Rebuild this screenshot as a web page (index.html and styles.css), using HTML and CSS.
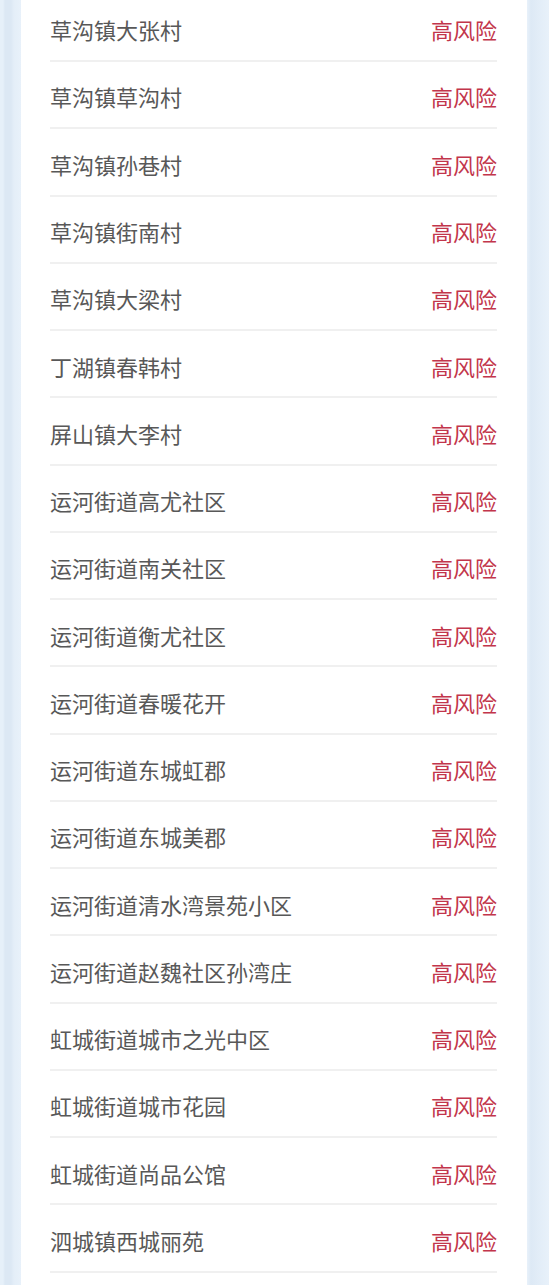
FILE: index.html
```html
<!DOCTYPE html>
<html lang="zh-CN">
<head>
<meta charset="utf-8">
<title>风险地区</title>
<link rel="stylesheet" href="styles.css">
</head>
<body>
<div class="page">
  <div class="card">
    <ul class="list">
      <li class="row"><span class="name">草沟镇大张村</span><span class="level">高风险</span></li>
      <li class="row"><span class="name">草沟镇草沟村</span><span class="level">高风险</span></li>
      <li class="row"><span class="name">草沟镇孙巷村</span><span class="level">高风险</span></li>
      <li class="row"><span class="name">草沟镇街南村</span><span class="level">高风险</span></li>
      <li class="row"><span class="name">草沟镇大梁村</span><span class="level">高风险</span></li>
      <li class="row"><span class="name">丁湖镇春韩村</span><span class="level">高风险</span></li>
      <li class="row"><span class="name">屏山镇大李村</span><span class="level">高风险</span></li>
      <li class="row"><span class="name">运河街道高尤社区</span><span class="level">高风险</span></li>
      <li class="row"><span class="name">运河街道南关社区</span><span class="level">高风险</span></li>
      <li class="row"><span class="name">运河街道衡尤社区</span><span class="level">高风险</span></li>
      <li class="row"><span class="name">运河街道春暖花开</span><span class="level">高风险</span></li>
      <li class="row"><span class="name">运河街道东城虹郡</span><span class="level">高风险</span></li>
      <li class="row"><span class="name">运河街道东城美郡</span><span class="level">高风险</span></li>
      <li class="row"><span class="name">运河街道清水湾景苑小区</span><span class="level">高风险</span></li>
      <li class="row"><span class="name">运河街道赵魏社区孙湾庄</span><span class="level">高风险</span></li>
      <li class="row"><span class="name">虹城街道城市之光中区</span><span class="level">高风险</span></li>
      <li class="row"><span class="name">虹城街道城市花园</span><span class="level">高风险</span></li>
      <li class="row"><span class="name">虹城街道尚品公馆</span><span class="level">高风险</span></li>
      <li class="row"><span class="name">泗城镇西城丽苑</span><span class="level">高风险</span></li>
    </ul>
  </div>
</div>
</body>
</html>
```

FILE: styles.css
```css
html, body {
  margin: 0;
  padding: 0;
}
body {
  width: 549px;
  height: 1285px;
  overflow: hidden;
  font-family: "Noto Sans CJK SC", "Noto Sans", sans-serif;
  background: linear-gradient(to right,
    #e6f0f9 0px, #e6f0f9 3px,
    #dce8f4 5px, #dce8f4 11px,
    #e4eef8 14px, #e8f1fa 21px,
    #e8f1fa 527px,
    #dde9f5 531px, #e1ecf7 537px,
    #e8f1fa 549px);
}
.page {
  padding: 0 22px 0 21px;
  height: 100%;
}
.card {
  background: #ffffff;
  height: 100%;
  padding: 0 30px 0 29px;
  overflow: hidden;
}
.list {
  list-style: none;
  margin: -5.3px 0 0 0;
  padding: 0;
}
.row {
  box-sizing: border-box;
  height: 67.28px;
  padding-top: 19.5px;
  border-bottom: 2px solid #f0f0f0;
  display: flex;
  justify-content: space-between;
  align-items: flex-start;
  font-size: 22px;
  line-height: 30px;
}
.name {
  color: #585858;
}
.level {
  color: #c2354b;
}
```
